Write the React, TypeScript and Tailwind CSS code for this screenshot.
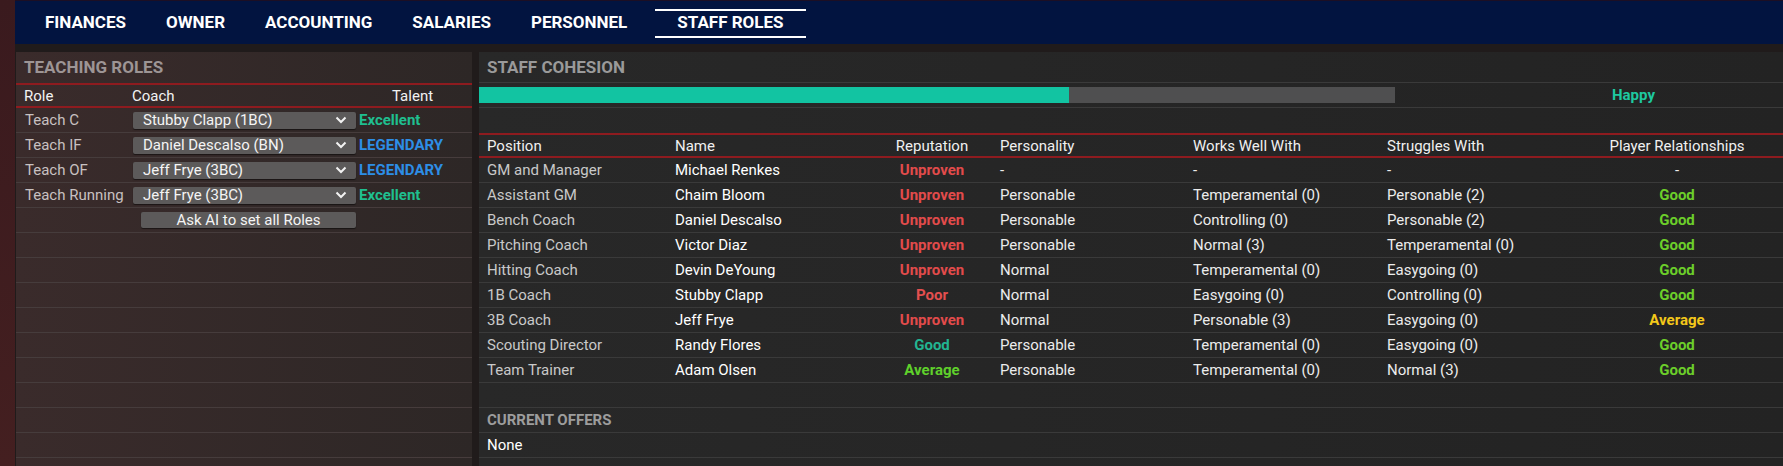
const tabs = ['FINANCES', 'OWNER', 'ACCOUNTING', 'SALARIES', 'PERSONNEL'];

type Staff = { pos: string; name: string; rep: string; pers: string; works: string; struggles: string; rel: string };

const staff: Staff[] = [
  { pos: 'GM and Manager', name: 'Michael Renkes', rep: 'Unproven', pers: '-', works: '-', struggles: '-', rel: '-' },
  { pos: 'Assistant GM', name: 'Chaim Bloom', rep: 'Unproven', pers: 'Personable', works: 'Temperamental (0)', struggles: 'Personable (2)', rel: 'Good' },
  { pos: 'Bench Coach', name: 'Daniel Descalso', rep: 'Unproven', pers: 'Personable', works: 'Controlling (0)', struggles: 'Personable (2)', rel: 'Good' },
  { pos: 'Pitching Coach', name: 'Victor Diaz', rep: 'Unproven', pers: 'Personable', works: 'Normal (3)', struggles: 'Temperamental (0)', rel: 'Good' },
  { pos: 'Hitting Coach', name: 'Devin DeYoung', rep: 'Unproven', pers: 'Normal', works: 'Temperamental (0)', struggles: 'Easygoing (0)', rel: 'Good' },
  { pos: '1B Coach', name: 'Stubby Clapp', rep: 'Poor', pers: 'Normal', works: 'Easygoing (0)', struggles: 'Controlling (0)', rel: 'Good' },
  { pos: '3B Coach', name: 'Jeff Frye', rep: 'Unproven', pers: 'Normal', works: 'Personable (3)', struggles: 'Easygoing (0)', rel: 'Average' },
  { pos: 'Scouting Director', name: 'Randy Flores', rep: 'Good', pers: 'Personable', works: 'Temperamental (0)', struggles: 'Easygoing (0)', rel: 'Good' },
  { pos: 'Team Trainer', name: 'Adam Olsen', rep: 'Average', pers: 'Personable', works: 'Temperamental (0)', struggles: 'Normal (3)', rel: 'Good' },
];

const roles = [
  { role: 'Teach C', coach: 'Stubby Clapp (1BC)', talent: 'Excellent' },
  { role: 'Teach IF', coach: 'Daniel Descalso (BN)', talent: 'LEGENDARY' },
  { role: 'Teach OF', coach: 'Jeff Frye (3BC)', talent: 'LEGENDARY' },
  { role: 'Teach Running', coach: 'Jeff Frye (3BC)', talent: 'Excellent' },
];

const repColor: Record<string, string> = {
  Unproven: 'text-[#e24b4b]',
  Poor: 'text-[#e44f4f]',
  Good: 'text-[#22b592]',
  Average: 'text-[#5fd12b]',
};

const relColor: Record<string, string> = {
  Good: 'text-[#6ccf2a] font-bold',
  Average: 'text-[#f3c81a] font-bold',
  '-': 'text-[#ececec]',
};

const cols = 'grid grid-cols-[188px_189px_136px_193px_194px_190px_200px] items-center pl-2';

function RedLine() {
  return <div className="h-[2px] bg-[#8e1b1f]" />;
}

function Chevron() {
  return (
    <svg width="12" height="8" viewBox="0 0 12 8" className="shrink-0">
      <polyline points="1.5,1.5 6,6 10.5,1.5" fill="none" stroke="#f2f2f2" strokeWidth="2" />
    </svg>
  );
}

function TeachingRoles() {
  const empties = Array.from({ length: 10 });
  return (
    <div className="ml-[1px] w-[456px] shrink-0 bg-gradient-to-r from-[#3a2b2b] to-[#2d2726]">
      <div className="flex h-[31px] items-center pl-2 text-[17px] font-bold text-[#9d9595]">TEACHING ROLES</div>
      <RedLine />
      <div className="grid h-[21px] grid-cols-[108px_260px_1fr] items-center pl-2 text-[15px] text-[#f2f2f2]">
        <span>Role</span>
        <span>Coach</span>
        <span>Talent</span>
      </div>
      <RedLine />
      {roles.map((r) => (
        <div key={r.role} className="grid h-[25px] grid-cols-[109px_226px_1fr] items-center border-b border-[#463c3c] pl-2 text-[15px]">
          <span className="pl-[1px] text-[#c8c1c1]">{r.role}</span>
          <div className="flex h-[17px] w-[223px] items-center justify-between rounded-[2px] bg-[#5c5a5a] pl-[10px] pr-[9px] text-[#f4f4f4] shadow-[0_1px_1px_rgba(0,0,0,0.5)]">
            <span className="leading-none">{r.coach}</span>
            <Chevron />
          </div>
          <span className={r.talent === 'LEGENDARY' ? 'font-bold text-[#2d8ee6]' : 'font-bold text-[#1fbf8f]'}>{r.talent}</span>
        </div>
      ))}
      <div className="grid h-[25px] grid-cols-[109px_226px_1fr] items-center border-b border-[#463c3c] pl-2">
        <span />
        <button className="ml-2 flex h-[16px] w-[215px] items-center justify-center rounded-[2px] bg-[#5c5a5a] text-[15px] leading-none text-[#f4f4f4] shadow-[0_1px_1px_rgba(0,0,0,0.5)]">
          Ask AI to set all Roles
        </button>
      </div>
      {empties.map((_, i) => (
        <div key={i} className="h-[25px] border-b border-[#463c3c]" />
      ))}
    </div>
  );
}

function StaffCohesion() {
  return (
    <div className="flex-1 bg-gradient-to-r from-[#282828] to-[#232323] text-[15px]">
      <div className="flex h-[31px] items-center border-b border-[#3a3a3a] pl-2 pt-[1px] text-[17px] font-bold text-[#9a9a9a]">STAFF COHESION</div>
      <div className="flex h-[25px] items-center border-b border-[#3a3a3a]">
        <div className="h-[16px] w-[916px] bg-[#4f4f50]">
          <div className="h-full bg-[#12c4a2]" style={{ width: 590 }} />
        </div>
        <span className="ml-[217px] font-bold text-[#1ec8a0]">Happy</span>
      </div>
      <div className="h-[25px]" />
      <RedLine />
      <div className={`${cols} h-[21px] text-[#f0f0f0]`}>
        <span>Position</span>
        <span>Name</span>
        <span className="text-center">Reputation</span>
        <span>Personality</span>
        <span>Works Well With</span>
        <span>Struggles With</span>
        <span className="text-center">Player Relationships</span>
      </div>
      <RedLine />
      {staff.map((s) => (
        <div key={s.pos} className={`${cols} h-[25px] border-b border-[#3a3a3a]`}>
          <span className="text-[#c9c9c9]">{s.pos}</span>
          <span className="text-white">{s.name}</span>
          <span className={`text-center font-bold ${repColor[s.rep]}`}>{s.rep}</span>
          <span className="text-[#ececec]">{s.pers}</span>
          <span className="text-[#ececec]">{s.works}</span>
          <span className="text-[#ececec]">{s.struggles}</span>
          <span className={`text-center ${relColor[s.rel]}`}>{s.rel}</span>
        </div>
      ))}
      <div className="h-[25px] border-b border-[#3a3a3a]" />
      <div className="flex h-[25px] items-center border-b border-[#3a3a3a] pl-2 font-bold text-[#9d9d9d]">CURRENT OFFERS</div>
      <div className="flex h-[25px] items-center border-b border-[#3a3a3a] pl-2 text-white">None</div>
      <div className="h-[25px] border-b border-[#3a3a3a]" />
    </div>
  );
}

export default function App() {
  return (
    <div className="flex h-[466px] w-full overflow-hidden bg-[#3d1c1e] font-['Roboto',sans-serif]">
      <div className="w-[15px] shrink-0 bg-gradient-to-b from-[#3a1a1e] to-[#441f20]" />
      <div className="flex min-w-0 flex-1 flex-col">
        <nav className="flex h-[44px] shrink-0 items-center border-t border-[#1c0f24] bg-[#021440] pl-[10px] pt-[1px] text-[17px] font-bold text-white">
          {tabs.map((t) => (
            <div key={t} className="px-5">{t}</div>
          ))}
          <div className="ml-2 flex h-[29px] items-center border-y-2 border-white px-[22px]">STAFF ROLES</div>
        </nav>
        <div className="flex flex-1 gap-[7px] bg-[#201b1b] pt-2">
          <TeachingRoles />
          <StaffCohesion />
        </div>
      </div>
    </div>
  );
}
